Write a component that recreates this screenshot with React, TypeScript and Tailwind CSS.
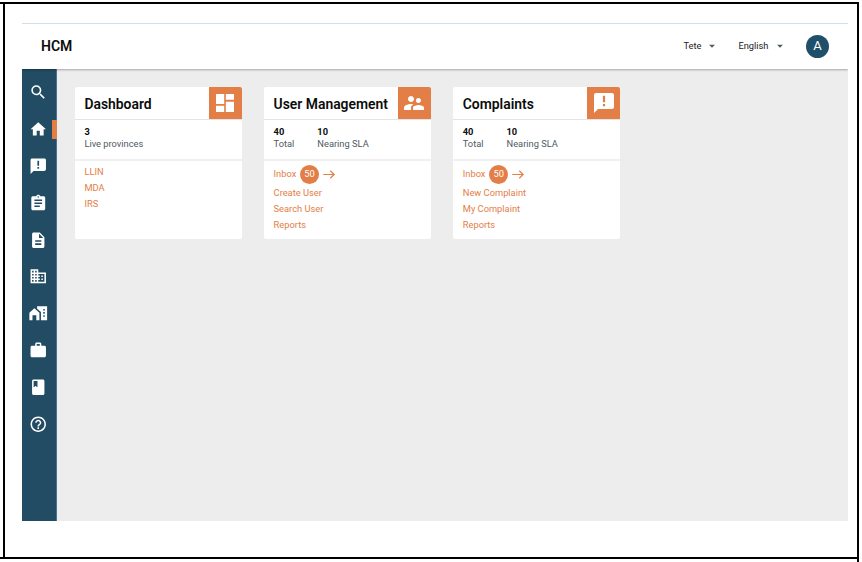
import type { ReactNode } from 'react';
import type { IconType } from 'react-icons';
import {
  MdSearch, MdHome, MdAssignment, MdDescription, MdBusiness,
  MdWork, MdClass, MdHelpOutline, MdSupervisorAccount, MdArrowDropDown,
} from 'react-icons/md';

type IconProps = { size?: number | string; className?: string };

function Feedback({ size = 24, className }: IconProps) {
  return (
    <svg width={size} height={size} viewBox="0 0 24 24" fill="currentColor" fillRule="evenodd" className={className}>
      <path d="M20 2H4C2.9 2 2 2.9 2 4v18l4-4h14c1.1 0 2-.9 2-2V4c0-1.1-.9-2-2-2ZM10.900 4.800h2.200v6.400h-2.200ZM10.900 13h2.200v2.200h-2.200Z" />
    </svg>
  );
}

function HomeWork({ size = 24, className }: IconProps) {
  return (
    <svg width={size} height={size} viewBox="0 0 24 24" fill="currentColor" fillRule="evenodd" className={className}>
      <path d="M0.500 11.300L7 5.500l6.500 5.800V21H9.500v-6.500h-5V21H0.500Z" />
      <path d="M10.500 3v3l5 4.400V21h8V3ZM18.500 6.500h2v2h-2ZM18.500 10.500h2v2h-2ZM18.500 14.500h2v2h-2Z" />
    </svg>
  );
}

function Dashboard() {
  return (
    <svg width="18" height="18" viewBox="0 0 18 18" fill="currentColor">
      <path d="M0 0h8.200v10H0ZM9.800 0H18v5.800H9.800ZM0 11.800h8.200V18H0ZM9.800 7.800H18V18H9.800Z" />
    </svg>
  );
}

const navIcons: (IconType | typeof Feedback)[] = [
  MdSearch, MdHome, Feedback, MdAssignment, MdDescription,
  MdBusiness, HomeWork, MdWork, MdClass, MdHelpOutline,
];

type CardProps = {
  title: string;
  icon: ReactNode;
  stats: { value: string; label: string }[];
  inbox?: string;
  links: string[];
};

function Card({ title, icon, stats, inbox, links }: CardProps) {
  return (
    <section className="flex h-[151.500px] w-[166.500px] flex-col overflow-hidden rounded-[2px] bg-white">
      <div className="flex h-[33px] shrink-0 justify-between border-b border-[#e4e4e4]">
        <h2 className="pt-[1px] pl-[9.400px] text-[13.900px] leading-[33px] font-semibold whitespace-nowrap text-[#0b0c0c]">{title}</h2>
        <div className="flex h-[32px] w-[32.500px] shrink-0 items-center justify-center bg-[#e37e46] text-white">{icon}</div>
      </div>
      <div className="flex h-[41px] shrink-0 gap-[23px] border-b-2 border-[#f0f0f0] pt-[6px] pl-[9.400px]">
        {stats.map((s) => (
          <div key={s.label} className="text-[9.300px] leading-[12px]">
            <div className="font-bold text-[#0b0c0c]">{s.value}</div>
            <div className="whitespace-nowrap text-[#505a5f]">{s.label}</div>
          </div>
        ))}
      </div>
      <div className="pt-[3px] pl-[9.400px] text-[9.300px] text-[#e37e46]">
        {inbox && (
          <div className="mb-[0.500px] flex h-[20px] items-center">
            <span>Inbox</span>
            <span className="ml-[3.700px] flex size-[19px] items-center justify-center rounded-full bg-[#e37e46] text-white">{inbox}</span>
            <svg className="ml-[4px] h-[9px] w-[12px]" viewBox="0 0 12 9" fill="none" stroke="currentColor" strokeWidth="1.2">
              <path d="M0.300 4.500H11.200M7.300 0.700L11.200 4.500L7.300 8.300" />
            </svg>
          </div>
        )}
        {links.map((l) => (
          <div key={l} className="h-[16.100px] leading-[16px]">{l}</div>
        ))}
      </div>
    </section>
  );
}

function Picker({ label }: { label: string }) {
  return (
    <div className="flex items-center text-[9.300px] text-[#222]">
      <span>{label}</span>
      <MdArrowDropDown size={14} className="ml-[4px] text-[#505a5f]" />
    </div>
  );
}

export default function App() {
  return (
    <div className="h-[562px] w-[862px] overflow-hidden bg-white pt-[2px] font-['Roboto',sans-serif]">
      <div className="h-[560px] w-[859px] border-t-2 border-r-2 border-black">
        <div className="h-[555px] border-b-2 border-black pl-[3px]">
          <div className="h-full border-l-2 border-black pt-[19px] pl-[17px]">
            <div className="flex h-[498px] w-[826px] flex-col overflow-hidden">
              <header className="z-10 flex h-[46px] shrink-0 items-center border-t border-[#cfdfeb] bg-white pr-[19px] pb-px pl-[19px] shadow-[0_1px_2px_rgba(0,0,0,0.3)]">
                <h1 className="flex-1 pt-px text-[14px] font-semibold text-[#0b0c0c]">HCM</h1>
                <Picker label="Tete" />
                <div className="ml-[19px]"><Picker label="English" /></div>
                <div className="ml-[19.500px] flex size-[23px] items-center justify-center rounded-full bg-[#204f69] text-[13px] text-white">A</div>
              </header>
              <div className="flex min-h-0 flex-1">
                <nav className="flex w-[35px] shrink-0 flex-col border-r border-[#506f97] bg-[#224c63] pt-[5px]">
                  {navIcons.map((Icon, i) => (
                    <div key={i} className="flex h-[36.850px] items-center pl-[7px] text-white">
                      <Icon size={18.5} className="shrink-0" />
                      {i === 1 && <span className="-mr-px ml-auto h-[18.500px] w-[5px] bg-[#e37e46]" />}
                    </div>
                  ))}
                </nav>
                <main className="flex flex-1 items-start gap-[22.700px] bg-[#ededed] pt-[18px] pl-[18px]">
                  <Card
                    title="Dashboard"
                    icon={<Dashboard />}
                    stats={[{ value: '3', label: 'Live provinces' }]}
                    links={['LLIN', 'MDA', 'IRS']}
                  />
                  <Card
                    title="User Management"
                    icon={<MdSupervisorAccount size={24} />}
                    stats={[{ value: '40', label: 'Total' }, { value: '10', label: 'Nearing SLA' }]}
                    inbox="50"
                    links={['Create User', 'Search User', 'Reports']}
                  />
                  <Card
                    title="Complaints"
                    icon={<Feedback size={24} />}
                    stats={[{ value: '40', label: 'Total' }, { value: '10', label: 'Nearing SLA' }]}
                    inbox="50"
                    links={['New Complaint', 'My Complaint', 'Reports']}
                  />
                </main>
              </div>
            </div>
          </div>
        </div>
      </div>
    </div>
  );
}
